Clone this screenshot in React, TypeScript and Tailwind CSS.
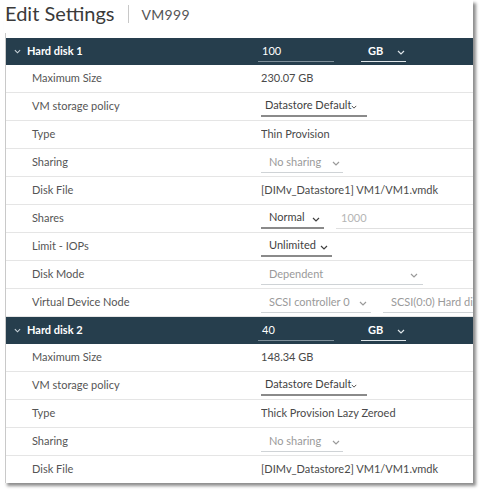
import type { ReactNode } from "react";

function Chevron({ className = "" }: { className?: string }) {
  return (
    <svg viewBox="0 0 8 5" className={className} fill="none" stroke="currentColor" strokeWidth="1.2">
      <polyline points="1,1 4,4 7,1" />
    </svg>
  );
}

function Select({
  text,
  width,
  chevronAt,
  disabled = false,
}: {
  text: string;
  width: string;
  chevronAt: string;
  disabled?: boolean;
}) {
  return (
    <div
      className={`relative flex h-[20px] items-center pl-[8px] ${width} ${
        disabled ? "border-b border-[#cfd3d6] text-[#9a9a9a]" : "border-b-2 border-[#8a8a8a] text-[#3f3f3f]"
      }`}
    >
      <span className="whitespace-nowrap">{text}</span>
      <Chevron className={`absolute top-[8px] h-[5px] w-[8px] ${chevronAt}`} />
    </div>
  );
}

function Row({ label, children }: { label: string; children: ReactNode }) {
  return (
    <div className="flex h-[28px] items-center border-b border-[#e5e5e5]">
      <div className="w-[255px] pl-[26px] text-[#555]">{label}</div>
      <div className="flex flex-1 items-center gap-[12px] overflow-hidden text-[#4a4a4a]">{children}</div>
    </div>
  );
}

function DiskHeader({ name, size }: { name: string; size: string }) {
  return (
    <div className="flex h-[27px] items-center bg-[#263e4d] text-white">
      <div className="flex w-[252px] items-center gap-[6px] pl-[8px] font-bold">
        <Chevron className="h-[5px] w-[7px] text-[#c9d3da]" />
        <span>{name}</span>
      </div>
      <div className="flex h-[20px] w-[76px] items-center border-b border-[#7d8e99] pl-[4px]">{size}</div>
      <div className="relative ml-[27px] flex h-[20px] w-[45px] items-center border-b border-[#dfe6ea] pl-[7px] font-bold">
        GB
        <Chevron className="absolute left-[36px] top-[8px] h-[5px] w-[8px] text-[#dfe6ea]" />
      </div>
    </div>
  );
}

export default function App() {
  return (
    <div className="h-[492px] w-[481px] overflow-hidden bg-white font-['Lato',sans-serif] text-[11px]">
      <div className="ml-[4px] h-[483px] w-[469px] overflow-hidden bg-white shadow-[3px_3px_3px_rgba(0,0,0,0.45)]">
        <div className="flex h-[33px] items-start pt-[1px]">
          <span className="pl-[1px] text-[20px] leading-[24px] text-[#3a3a3a]">Edit Settings</span>
          <div className="ml-[13px] mt-[4px] h-[18px] w-px bg-[#c8c8c8]" />
          <span className="ml-[13px] mt-[5px] text-[14px] leading-[18px] tracking-[0.3px] text-[#555]">VM999</span>
        </div>
        <div className="ml-[1px] border-l border-[#c9c9c9] pt-[5px]">
          <DiskHeader name="Hard disk 1" size="100" />
          <Row label="Maximum Size">230.07 GB</Row>
          <Row label="VM storage policy">
            <Select text="Datastore Default" width="w-[106px] !pl-[4px]" chevronAt="left-[90px] !h-[4px] !w-[6px] !top-[8px]" />
          </Row>
          <Row label="Type">Thin Provision</Row>
          <Row label="Sharing">
            <Select text="No sharing" width="w-[82px]" chevronAt="left-[71px]" disabled />
          </Row>
          <Row label="Disk File">[DIMv_Datastore1] VM1/VM1.vmdk</Row>
          <Row label="Shares">
            <Select text="Normal" width="w-[63px]" chevronAt="left-[51px]" />
            <div className="flex h-[20px] flex-1 items-center border-b border-[#e0e0e0] pl-[5px] text-[#b5b5b5]">1000</div>
          </Row>
          <Row label="Limit - IOPs">
            <Select text="Unlimited" width="w-[71px]" chevronAt="left-[59px]" />
          </Row>
          <Row label="Disk Mode">
            <Select text="Dependent" width="w-[162px]" chevronAt="left-[149px]" disabled />
          </Row>
          <Row label="Virtual Device Node">
            <Select text="SCSI controller 0" width="w-[110px]" chevronAt="left-[98px]" disabled />
            <div className="flex h-[20px] flex-1 items-center overflow-hidden whitespace-nowrap border-b border-[#cfd3d6] pl-[8px] text-[#9a9a9a]">
              SCSI(0:0) Hard disk 1
            </div>
          </Row>
          <DiskHeader name="Hard disk 2" size="40" />
          <Row label="Maximum Size">148.34 GB</Row>
          <Row label="VM storage policy">
            <Select text="Datastore Default" width="w-[106px] !pl-[4px]" chevronAt="left-[90px] !h-[4px] !w-[6px] !top-[8px]" />
          </Row>
          <Row label="Type">Thick Provision Lazy Zeroed</Row>
          <Row label="Sharing">
            <Select text="No sharing" width="w-[82px]" chevronAt="left-[71px]" disabled />
          </Row>
          <Row label="Disk File">[DIMv_Datastore2] VM1/VM1.vmdk</Row>
        </div>
      </div>
    </div>
  );
}
